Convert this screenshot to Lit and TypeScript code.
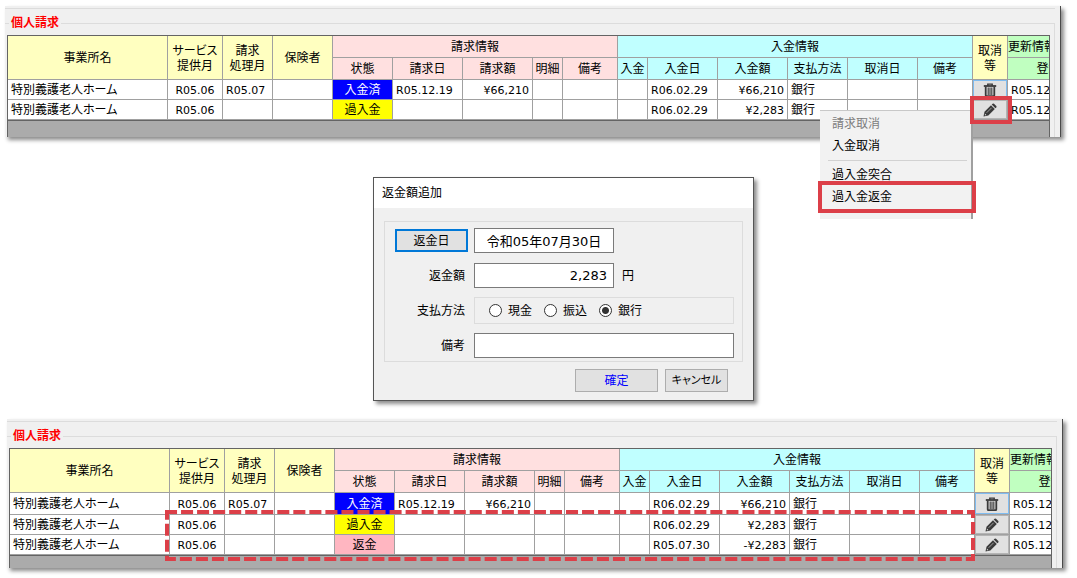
import { LitElement, html, svg, css } from "lit";
import { customElement, property } from "lit/decorators.js";
import { classMap } from "lit/directives/class-map.js";

interface Row {
  month: string;
  processed: string;
  state: string;
  tone: string;
  billed: string;
  billAmount: string;
  paid: string;
  paidAmount: string;
  method: string;
  icon: "trash" | "pencil";
}

const base = {
  month: "R05.06",
  processed: "",
  billed: "",
  billAmount: "",
  method: "銀行",
};

const PAID: Row = {
  ...base,
  processed: "R05.07",
  state: "入金済",
  tone: "paid",
  billed: "R05.12.19",
  billAmount: "¥66,210",
  paid: "R06.02.29",
  paidAmount: "¥66,210",
  icon: "trash",
};

const OVERPAID: Row = {
  ...base,
  state: "過入金",
  tone: "over",
  paid: "R06.02.29",
  paidAmount: "¥2,283",
  icon: "pencil",
};

const REFUND: Row = {
  ...base,
  state: "返金",
  tone: "refund",
  paid: "R05.07.30",
  paidAmount: "-¥2,283",
  icon: "pencil",
};

const WIDTHS = [160, 55, 50, 60, 60, 70, 70, 30, 55, 30, 70, 70, 60, 70, 55, 35, 106];

const trash = svg`<svg width="14" height="14" viewBox="0 0 14 14" fill="none" stroke="#3a3a3a" aria-hidden="true">
  <path d="M.8 3h12.4" stroke-width="1.8"/>
  <path d="M4.8 3V1.1h4.4V3" stroke-width="1.4"/>
  <path d="M2.7 3.6v8.6q0 1 1 1h6.6q1 0 1-1V3.6" stroke-width="1.8"/>
  <path d="M5.2 4.5v7.6M7 4.5v7.6M8.8 4.5v7.6" stroke-width="1.1"/>
</svg>`;

const pencil = svg`<svg width="14" height="14" viewBox="0 0 14 14" fill="#3a3a3a" aria-hidden="true">
  <path d="M.5 13.5l1-4.8L8 2.2l3.8 3.8L5.3 12.5z"/>
  <path d="M8.7 1.6l.9-.9q.7-.6 1.4 0l2.3 2.3q.6.7 0 1.4l-.9.9z"/>
  <path d="M3.6 9.8l5-5" stroke="#a8a8a8" stroke-width=".9"/>
  <path d="M1.9 10.6l1.5 1.5-1.5.3z" fill="#e1e1e1"/>
</svg>`;

@customElement("billing-panel")
class BillingPanel extends LitElement {
  @property({ attribute: false }) rows: Row[] = [];
  @property({ type: Boolean }) roomy = false;

  static styles = css`
    :host {
      display: block;
      position: relative;
      background: #f0f0f0;
      border-right: 1px solid #4a4a4a;
      box-shadow: 3px 3px 4px rgba(0, 0, 0, 0.45);
      padding: 2px 5px 0 0;
    }
    .rule {
      height: 6px;
      border: 1px solid #dcdcdc;
      border-width: 1px 0 0;
    }
    fieldset {
      margin: 0;
      min-width: 0;
      border: 1px solid #dcdcdc;
      border-width: 1px 1px 0 0;
      padding: 4px 4px 0 2px;
    }
    legend {
      margin-left: 2px;
      padding: 0 2px;
      font-weight: bold;
      line-height: 16px;
      color: #f00;
    }
    .grid {
      overflow: hidden;
      background: #ababab;
      border: 1px solid #646464;
      border-bottom: 0;
      padding-bottom: 16px;
    }
    .roomy {
      padding-bottom: 12px;
    }
    table {
      table-layout: fixed;
      border-collapse: separate;
      border-spacing: 0;
      border-bottom: 1px solid #646464;
      width: 1106px;
      background: #fff;
    }
    th,
    td {
      box-sizing: border-box;
      height: 20px;
      padding: 2px 0 0;
      border: 1px solid #a0a0a0;
      border-width: 0 1px 1px 0;
      font-weight: normal;
      white-space: nowrap;
      line-height: 15px;
      text-align: center;
    }
    th {
      height: 22px;
    }
    .roomy tbody tr:first-child td {
      height: 22px;
    }
    .base {
      background: #ffffc0;
    }
    .bill {
      background: #ffe0e0;
    }
    .pay {
      background: #c0ffff;
    }
    .update {
      background: #c0ffc0;
    }
    .left {
      text-align: left;
      padding-left: 3px;
    }
    .edge {
      text-align: left;
    }
    .num {
      padding-top: 1px;
      font-size: 11px;
    }
    .right {
      text-align: right;
      padding-right: 3px;
    }
    .act {
      padding: 0;
    }
    .paid {
      background: #00f;
      color: #fff;
    }
    .over {
      background: #ff0;
    }
    .refund {
      background: #ffb6c1;
    }
    button {
      display: flex;
      align-items: center;
      justify-content: center;
      box-sizing: border-box;
      width: 100%;
      height: 19px;
      padding: 0;
      border: 1px solid #b4b4b4;
      background: #e1e1e1;
    }
    .roomy tbody tr:first-child button {
      height: 21px;
    }
    button.trash {
      border-color: #7fbcf0;
    }
    button svg {
      display: block;
    }
  `;

  private row(r: Row) {
    return html`<tr>
      <td class="left">特別義護老人ホーム</td>
      <td class="num">${r.month}</td>
      <td class="num left">${r.processed}</td>
      <td></td>
      <td class=${r.tone}>${r.state}</td>
      <td class="num left">${r.billed}</td>
      <td class="num right">${r.billAmount}</td>
      <td></td>
      <td></td>
      <td></td>
      <td class="num left">${r.paid}</td>
      <td class="num right">${r.paidAmount}</td>
      <td class="left">${r.method}</td>
      <td></td>
      <td></td>
      <td class="act">
        <button class=${r.icon} aria-label=${r.icon === "trash" ? "取消" : "編集"}>
          ${r.icon === "trash" ? trash : pencil}
        </button>
      </td>
      <td class="num left">R05.12.19</td>
    </tr>`;
  }

  render() {
    return html`
      <div class="rule"></div>
      <fieldset>
        <legend>個人請求</legend>
        <div class=${classMap({ grid: true, roomy: this.roomy })}>
          <table>
            <colgroup>
              ${WIDTHS.map((w) => html`<col width=${w} />`)}
            </colgroup>
            <thead>
              <tr>
                <th class="base" rowspan="2">事業所名</th>
                <th class="base" rowspan="2">サービス<br />提供月</th>
                <th class="base" rowspan="2">請求<br />処理月</th>
                <th class="base" rowspan="2">保険者</th>
                <th class="bill" colspan="5">請求情報</th>
                <th class="pay" colspan="6">入金情報</th>
                <th class="base" rowspan="2">取消<br />等</th>
                <th class="update edge">更新情報</th>
              </tr>
              <tr>
                ${["状態", "請求日", "請求額", "明細", "備考"].map(
                  (t) => html`<th class="bill">${t}</th>`
                )}
                ${["入金", "入金日", "入金額", "支払方法", "取消日", "備考"].map(
                  (t) => html`<th class="pay">${t}</th>`
                )}
                <th class="update">登録日時</th>
              </tr>
            </thead>
            <tbody>
              ${this.rows.map((r) => this.row(r))}
            </tbody>
          </table>
        </div>
      </fieldset>
      <slot></slot>
    `;
  }
}

@customElement("refund-dialog")
class RefundDialog extends LitElement {
  static styles = css`
    :host {
      display: block;
      box-sizing: border-box;
      width: 381px;
      border: 1px solid #555;
      background: #f0f0f0;
      box-shadow: 3px 3px 4px rgba(0, 0, 0, 0.45);
    }
    h2 {
      margin: 0;
      padding: 0 8px;
      background: #fff;
      font-size: 12px;
      font-weight: normal;
      line-height: 30px;
    }
    form {
      padding: 13px 10px 8px;
    }
    .fields {
      display: grid;
      grid-template-columns: 73px 1fr;
      grid-auto-rows: 25px;
      gap: 10px 6px;
      align-items: center;
      border: 1px solid #dcdcdc;
      padding: 6px 8px 3px 10px;
    }
    .caption {
      padding-right: 3px;
      text-align: right;
    }
    .line {
      display: flex;
      align-items: center;
      gap: 8px;
    }
    input[type="text"] {
      box-sizing: border-box;
      width: 140px;
      height: 25px;
      margin: 0;
      padding: 0 6px;
      border: 1px solid #7a7a7a;
      background: #fff;
      color: #000;
      font: inherit;
      font-size: 13px;
    }
    .date {
      text-align: center;
    }
    .amount {
      text-align: right;
    }
    input.memo {
      width: 100%;
    }
    .options {
      display: flex;
      align-items: center;
      gap: 12px;
      height: 25px;
      border: 1px solid #dcdcdc;
      padding-left: 14px;
    }
    .options label {
      display: flex;
      align-items: center;
      gap: 6px;
    }
    input[type="radio"] {
      appearance: none;
      box-sizing: border-box;
      width: 13px;
      height: 13px;
      margin: 0;
      border: 1px solid #333;
      border-radius: 50%;
      background: #fff;
    }
    input[type="radio"]:checked {
      background: radial-gradient(circle, #333 0 3px, #fff 4px);
    }
    button {
      box-sizing: border-box;
      height: 23px;
      margin: 0;
      padding: 0;
      border: 1px solid #adadad;
      background: #e1e1e1;
      color: #000;
      font: inherit;
      font-feature-settings: inherit;
    }
    .pick {
      border: 2px solid #0078d7;
    }
    .actions {
      display: flex;
      justify-content: flex-end;
      gap: 7px;
      padding: 7px 15px 0 0;
    }
    .ok {
      width: 83px;
      color: #00f;
    }
    .cancel {
      width: 63px;
      font-size: 11px;
    }
  `;

  render() {
    return html`
      <h2>返金額追加</h2>
      <form @submit=${(e: Event) => e.preventDefault()}>
        <div class="fields">
          <button type="button" class="pick">返金日</button>
          <div class="line">
            <input class="date" type="text" aria-label="返金日" .value=${"令和05年07月30日"} />
          </div>
          <label class="caption" for="amount">返金額</label>
          <div class="line">
            <input id="amount" class="amount" type="text" .value=${"2,283"} />
            <span>円</span>
          </div>
          <span class="caption" id="method">支払方法</span>
          <div class="options" role="radiogroup" aria-labelledby="method">
            ${["現金", "振込", "銀行"].map(
              (m) => html`<label
                ><input type="radio" name="method" ?checked=${m === "銀行"} />${m}</label
              >`
            )}
          </div>
          <label class="caption" for="memo">備考</label>
          <input id="memo" class="memo" type="text" />
        </div>
        <div class="actions">
          <button type="submit" class="ok">確定</button>
          <button type="button" class="cancel">キャンセル</button>
        </div>
      </form>
    `;
  }
}

@customElement("app-root")
class AppRoot extends LitElement {
  static styles = css`
    :host {
      display: block;
      min-height: 100vh;
      box-sizing: border-box;
      overflow: hidden;
      padding: 6px 0 8px;
      background: #fff;
      color: #000;
      font-family: "DejaVu Sans", "Noto Sans CJK JP", sans-serif;
      font-size: 12px;
      line-height: 16px;
      font-feature-settings: "palt";
    }
    .first {
      margin: 0 16px 0 5px;
    }
    .second {
      margin: 18px 14px 0 7px;
    }
    .stage {
      display: flex;
      justify-content: center;
      padding: 40px 0 0 50px;
    }
    .mark {
      position: absolute;
      box-sizing: border-box;
      border: 4px solid #dc3f48;
      pointer-events: none;
    }
    .mark-edit {
      left: 965px;
      top: 90px;
      width: 42px;
      height: 28px;
    }
    .menu {
      position: absolute;
      left: 815px;
      top: 104px;
      box-sizing: border-box;
      width: 153px;
      height: 109px;
      padding-top: 2px;
      border-top: 1px solid #c8c8c8;
      border-right: 2px solid #a0a0a0;
      background: #f2f2f2;
    }
    .menu button {
      display: block;
      width: 100%;
      height: 22px;
      margin: 0;
      padding: 0 12px;
      border: 0;
      background: none;
      color: #000;
      font: inherit;
      text-align: left;
    }
    .menu button:disabled {
      color: #7d7d7d;
    }
    .menu hr {
      height: 1px;
      margin: 3px 4px 3px 8px;
      border: 0;
      background: #d2d2d2;
    }
    .mark-item {
      left: -2px;
      top: 70px;
      width: 158px;
      height: 32px;
    }
    .dashed {
      position: absolute;
      left: 158px;
      top: 91px;
    }
  `;

  render() {
    return html`
      <billing-panel class="first" .rows=${[PAID, OVERPAID]}>
        <div class="menu" role="menu">
          <button role="menuitem" disabled>請求取消</button>
          <button role="menuitem">入金取消</button>
          <hr />
          <button role="menuitem">過入金突合</button>
          <button role="menuitem">過入金返金</button>
          <div class="mark mark-item"></div>
        </div>
        <div class="mark mark-edit"></div>
      </billing-panel>
      <div class="stage"><refund-dialog></refund-dialog></div>
      <billing-panel class="second" roomy .rows=${[PAID, OVERPAID, REFUND]}>
        <svg class="dashed" width="810" height="51" aria-hidden="true">
          <rect x="2" y="2" width="806" height="47" fill="none" stroke="#dc3f48" stroke-width="4" stroke-dasharray="12.04 4" stroke-dashoffset="2" />
        </svg>
      </billing-panel>
    `;
  }
}
